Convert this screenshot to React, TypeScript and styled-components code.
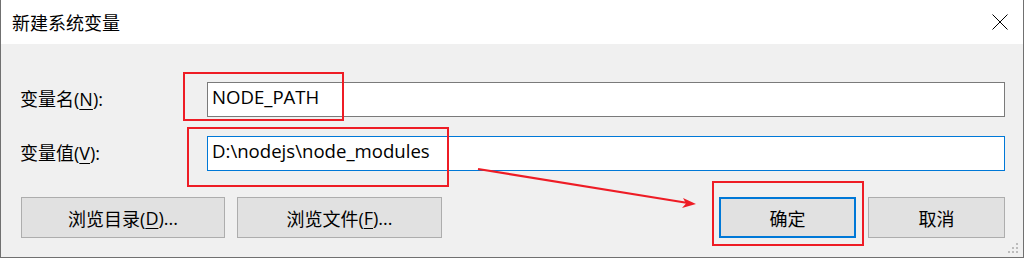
import styled, { createGlobalStyle } from 'styled-components'

const GlobalStyle = createGlobalStyle`
  html, body {
    margin: 0;
    padding: 0;
    background: #ffffff;
  }
  body {
    font-family: "Open Sans", "Noto Sans CJK SC", sans-serif;
  }
`

export default function App() {
  return (
    <>
      <GlobalStyle />
      <Window>
        <TitleBar>
          <Title>新建系统变量</Title>
          <CloseButton>
            <svg width="16" height="16" viewBox="0 0 16 16">
              <path d="M0.5 0.5 L15.5 15.5 M15.5 0.5 L0.5 15.5" stroke="#000" strokeWidth="1" fill="none" />
            </svg>
          </CloseButton>
        </TitleBar>
        <Body>
          <FieldRow>
            <Label>变量名(<u>N</u>):</Label>
            <Input>NODE_PATH</Input>
          </FieldRow>
          <FieldRow $gap={19}>
            <Label>变量值(<u>V</u>):</Label>
            <Input $focused>D:\nodejs\node_modules</Input>
          </FieldRow>
          <ButtonRow>
            <Button $width={204}>浏览目录(<u>D</u>)...</Button>
            <Button $width={205}>浏览文件(<u>F</u>)...</Button>
            <Spacer />
            <Button $width={137} $primary>确定</Button>
            <Button $width={137}>取消</Button>
          </ButtonRow>
        </Body>
        <Grip>
          <svg width="12" height="12" viewBox="0 0 12 12">
            <rect x="8" y="0" width="2" height="2" fill="#bcbcbc" />
            <rect x="4" y="4" width="2" height="2" fill="#bcbcbc" />
            <rect x="8" y="4" width="2" height="2" fill="#bcbcbc" />
            <rect x="0" y="8" width="2" height="2" fill="#bcbcbc" />
            <rect x="4" y="8" width="2" height="2" fill="#bcbcbc" />
            <rect x="8" y="8" width="2" height="2" fill="#bcbcbc" />
          </svg>
        </Grip>
        <Mark $x={183} $y={72} $w={161} $h={49} />
        <Mark $x={187} $y={127} $w={262} $h={60} />
        <Mark $x={712} $y={181} $w={152} $h={65} />
        <Arrow width="1023" height="258" viewBox="0 0 1023 258">
          <line x1="478" y1="169" x2="688" y2="203" stroke="#ee1c25" strokeWidth="2.2" />
          <path d="M696 204 L683 198 L686 203.5 L682 208 Z" fill="#ee1c25" />
        </Arrow>
      </Window>
    </>
  )
}

const Window = styled.div`
  position: relative;
  width: 1024px;
  height: 258px;
  box-sizing: border-box;
  border-left: 1px solid #707070;
  border-right: 1px solid #707070;
  border-bottom: 1px solid #707070;
  display: flex;
  flex-direction: column;
  background: #f0f0f0;
  overflow: hidden;
`
const TitleBar = styled.div`
  height: 44px;
  flex: none;
  background: #ffffff;
  display: flex;
  align-items: center;
  justify-content: space-between;
  padding-left: 11px;
  padding-right: 15px;
`
const Title = styled.div`
  font-size: 18px;
  color: #000;
`
const CloseButton = styled.div`
  width: 16px;
  height: 16px;
  display: flex;
`
const Body = styled.div`
  flex: 1;
  display: flex;
  flex-direction: column;
  padding: 38px 18px 0 19px;
`
const FieldRow = styled.div<{ $gap?: number }>`
  display: flex;
  align-items: center;
  margin-top: ${p => p.$gap ?? 0}px;
`
const Label = styled.div`
  width: 187px;
  font-size: 18px;
  color: #000;
  padding-bottom: 4px;
  u {
    text-decoration-thickness: 1px;
    text-underline-offset: 3px;
  }
`
const Input = styled.div<{ $focused?: boolean }>`
  flex: 1;
  height: 35px;
  box-sizing: border-box;
  background: #ffffff;
  border: 1px solid ${p => (p.$focused ? '#0078d7' : '#7a7a7a')};
  padding-left: 4px;
  padding-bottom: 6px;
  display: flex;
  align-items: center;
  font-size: 18.6px;
  color: #000;
  white-space: pre;
`
const ButtonRow = styled.div`
  display: flex;
  align-items: center;
  gap: 14px;
  margin-top: 26px;
  padding-left: 1px;
`
const Spacer = styled.div`
  flex: 1;
  margin-right: -2px;
`
const Button = styled.div<{ $width: number; $primary?: boolean }>`
  width: ${p => p.$width}px;
  height: 41px;
  box-sizing: border-box;
  background: #e1e1e1;
  border: ${p => (p.$primary ? '2px solid #0078d7' : '1px solid #adadad')};
  display: flex;
  align-items: center;
  justify-content: center;
  font-size: 18px;
  color: #000;
  u {
    text-decoration-thickness: 1px;
    text-underline-offset: 3px;
  }
  & + & {
    margin-left: -2px;
  }
`
const Grip = styled.div`
  position: absolute;
  right: 3px;
  bottom: 2px;
  width: 12px;
  height: 12px;
  display: flex;
`
const Mark = styled.div<{ $x: number; $y: number; $w: number; $h: number }>`
  position: absolute;
  left: ${p => p.$x - 1}px;
  top: ${p => p.$y}px;
  width: ${p => p.$w}px;
  height: ${p => p.$h}px;
  box-sizing: border-box;
  border: 2px solid #ee1c25;
  pointer-events: none;
`
const Arrow = styled.svg`
  position: absolute;
  left: -1px;
  top: 0;
  pointer-events: none;
`
